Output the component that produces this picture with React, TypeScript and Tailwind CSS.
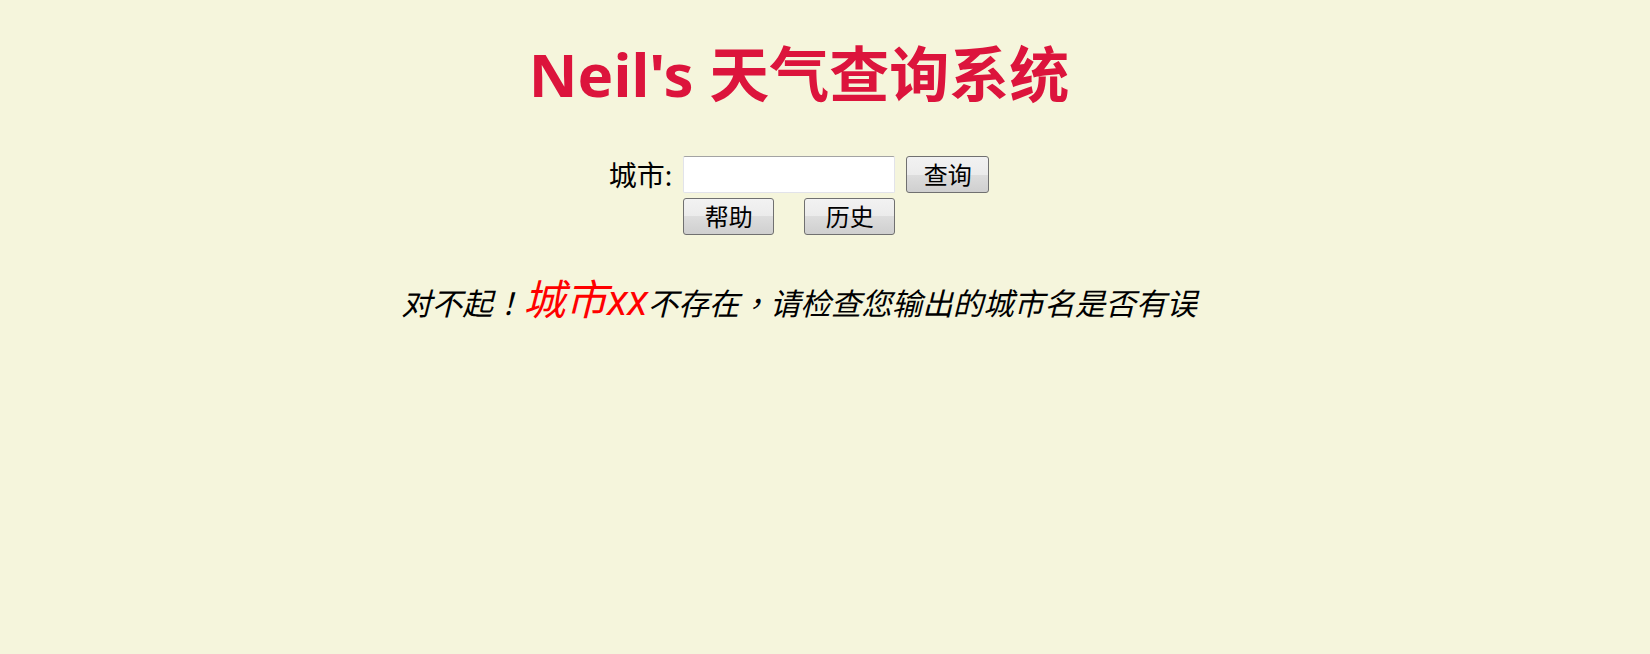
const font = "font-['Noto_Sans','Noto_Sans_CJK_SC',sans-serif]";
const punct = "font-['Noto_Sans_CJK_TC',sans-serif]";

function WinButton({ label, className = "" }: { label: string; className?: string }) {
  return (
    <button
      type="button"
      className={`h-[37px] rounded-[3px] border border-[#707070] bg-[linear-gradient(#f2f2f2,#ebebeb_50%,#dddddd_50%,#cfcfcf)] text-[24px] leading-none text-black ${className}`}
    >
      {label}
    </button>
  );
}

export default function App() {
  return (
    <div className={`min-h-[654px] w-full bg-[#f5f5dc] ${font}`}>
      <div className="w-[1598px] text-center">
        <h1 className="pt-[38px] text-[60px] font-bold leading-[72px] text-[#dc143c]">
          Neil's 天气查询系统
        </h1>

        <div className="mt-[46px] flex justify-center">
          <div className="grid grid-cols-[auto_212px_auto] items-center gap-x-[11px] gap-y-[5px]">
            <label className="text-[28px] leading-none text-black">城市:</label>
            <input
              type="text"
              className="h-[37px] w-[212px] rounded-[2px] border border-[#e2e3ea] border-t-[#a3a3a3] bg-white px-1 text-[20px] outline-none"
            />
            <WinButton label="查询" className="w-[83px]" />
            <div />
            <div className="flex justify-between">
              <WinButton label="帮助" className="w-[91px]" />
              <WinButton label="历史" className="w-[91px]" />
            </div>
            <div />
          </div>
        </div>

        <p className="mt-[40px] text-[30.5px] italic leading-[48px] text-black">
          对不起<span className={punct}>！</span>
          <span className="text-[42px] text-[#ff0000]">城市xx</span>不存在<span className={punct}>，</span>请检查您输出的城市名是否有误
        </p>
      </div>
    </div>
  );
}
